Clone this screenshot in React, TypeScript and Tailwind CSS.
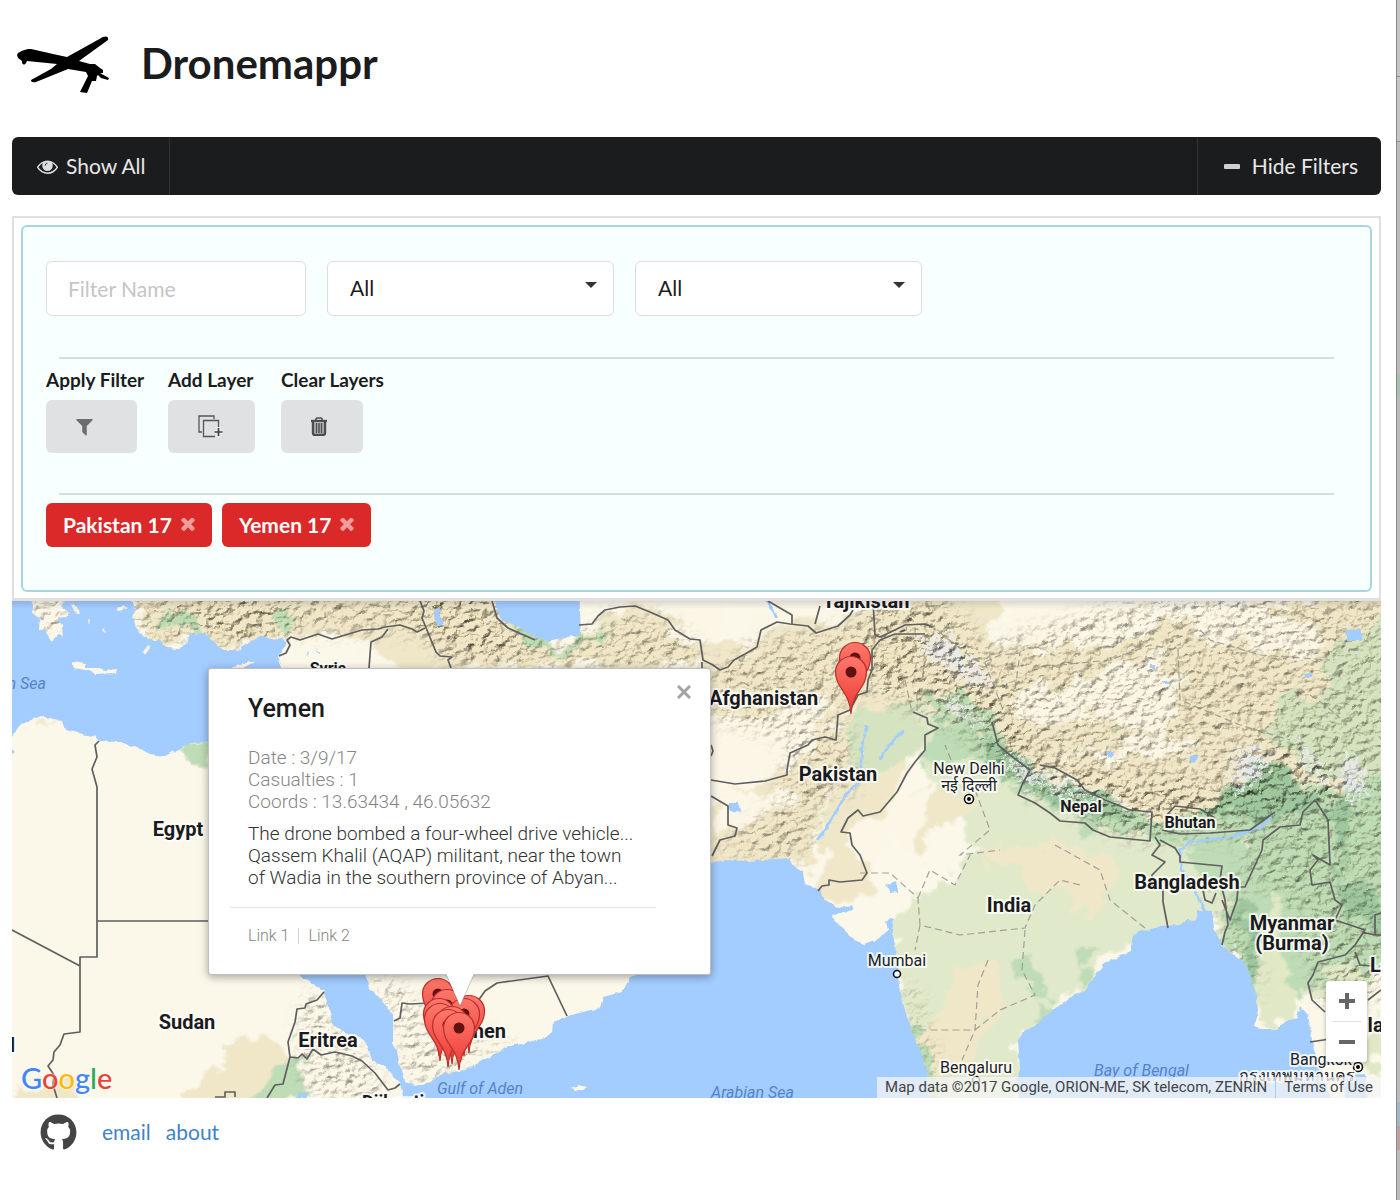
import React from "react";
import { FaGithub } from "react-icons/fa";

type IconProps = { className?: string };

const DroneLogo = ({ className }: IconProps) => (
  <svg viewBox="0 0 93 58" className={className} aria-hidden="true">
    <path
      fill="#000"
      d="M0 19 1 17C5 15 8 13 14 13C20 14 27 16 36 18L50 21L86 1Q92-1 91 4L62 25L73 28L78 28L83 32L86 34L86 37L83 37L92 42L91 44L84 42L81 39L80 40L79 45L75 45L70 57L63 56L71 40L69 36L51 33L19 46Q14 47 14 44L34 33L40 28L10 25L9 27Q7 30 5 27L5 25L1 22Z"
    />
  </svg>
);

const EyeIcon = ({ className }: IconProps) => (
  <svg viewBox="0 0 1792 1792" className={className} fill="currentColor" aria-hidden="true">
    <path d="M1664 960q-152-236-381-353 61 104 61 225 0 185-131.5 316.5t-316.5 131.5-316.5-131.5-131.5-316.5q0-121 61-225-229 117-381 353 133 205 333.5 326.5t434.5 121.5 434.5-121.5 333.5-326.5zm-720-384q0-20-14-34t-34-14q-125 0-214.5 89.5t-89.5 214.5q0 20 14 34t34 14 34-14 14-34q0-86 61-147t147-61q20 0 34-14t14-34zm848 384q0 34-20 69-140 230-376.5 368.5t-499.5 138.5-499.5-139-376.5-368q-20-35-20-69t20-69q140-229 376.5-368t499.5-139 499.5 139 376.5 368q20 35 20 69z" />
    <circle cx="896" cy="850" r="330" />
    <path d="M690 830q0-190 200-210" fill="none" stroke="#1b1c1d" strokeWidth="70" />
  </svg>
);

const FilterIcon = ({ className }: IconProps) => (
  <svg viewBox="0 0 1792 1792" className={className} fill="currentColor" aria-hidden="true">
    <path d="M1595 295q17 41-14 70l-493 493v742q0 42-39 59-13 5-25 5-27 0-45-19l-256-256q-19-19-19-45v-486l-493-493q-31-29-14-70 17-39 59-39h1280q42 0 59 39z" />
  </svg>
);

const TimesIcon = ({ className }: IconProps) => (
  <svg viewBox="280 410 1232 1232" className={className} fill="currentColor" aria-hidden="true">
    <path d="M1490 1322q0 40-28 68l-136 136q-28 28-68 28t-68-28l-294-294-294 294q-28 28-68 28t-68-28l-136-136q-28-28-28-68t28-68l294-294-294-294q-28-28-28-68t28-68l136-136q28-28 68-28t68 28l294 294 294-294q28-28 68-28t68 28l136 136q28 28 28 68t-28 68l-294 294 294 294q28 28 28 68z" />
  </svg>
);

const LayerIcon = ({ className }: IconProps) => (
  <svg viewBox="0 0 26 24" className={className} fill="none" stroke="#555" strokeWidth="1.3" aria-hidden="true">
    <path d="M4 17H1V1h15v3" />
    <path d="M17 21.500H5.500V5.500h15V14" />
    <path d="M20.500 12v10M16 17h9" stroke="#eee" strokeWidth="4" />
    <path d="M20.500 13v8M16.500 17h8" stroke="#444" strokeWidth="1.700" />
  </svg>
);

const TrashIcon = ({ className }: IconProps) => (
  <svg viewBox="0 0 16 19" className={className} fill="none" stroke="#4d4d4d" aria-hidden="true">
    <path d="M5 3V2q0-1 1-1h4q1 0 1 1v1" strokeWidth="1.600" />
    <path d="M0 4h16" strokeWidth="2.400" />
    <path d="M2 5v11q0 2 2 2h8q2 0 2-2V5" fill="#bcbdbe" strokeWidth="2.400" />
    <path d="M5.500 6v10M8 6v10M10.500 6v10" strokeWidth="1.500" />
  </svg>
);

const Chevron = () => (
  <svg viewBox="0 0 12 6" className="pointer-events-none absolute top-[21px] right-[17px] h-[6px] w-3" aria-hidden="true">
    <path d="M0 0h12L6 6z" fill="#333" />
  </svg>
);

const Dropdown = ({ label }: { label: string }) => (
  <div className="relative w-[287px]">
    <select
      aria-label={label}
      className="h-[55px] w-full appearance-none rounded-md border border-[#dcdddd] bg-white pr-10 pb-[2px] pl-[22px] text-[21px] text-[#1b1c1d]"
    >
      <option>All</option>
    </select>
    <Chevron />
  </div>
);

const LayerTag = ({ children }: { children: React.ReactNode }) => (
  <span className="flex h-11 items-center rounded-md bg-[#db2828] px-[17px] text-[21px] font-bold text-white">
    {children}
    <button type="button" aria-label="Remove layer" className="ml-[9px] text-white/55">
      <TimesIcon className="h-[14px] w-[14px]" />
    </button>
  </span>
);

const mainland =
  "M128 585L131 601 135 610 133 618 138 632 150 640 160 640 167 648 178 649 187 644 190 634 205 633 213 642 222 650 238 650 248 643 262 636 275 640 283 637 286 645 278 656 281 665 279 690 265 745 330 860 366 976 370 988 382 1000 393 1015 393 1045 398 1056 400 1068 404 1080 415 1086 430 1082 442 1074 460 1071 475 1065 485 1059 497 1054 505 1047 525 1043 545 1038 552 1032 553 1022 575 1014 600 1008 603 997 622 992 630 978 650 972 700 920 640 850 711 863 725 860 750 861 790 858 795 868 803 872 805 885 820 890 825 900 840 908 852 905 853 909 845 913 835 913 832 917 842 928 855 940 865 944 880 938 888 930 886 922 889 918 894 919 892 930 895 945 897 965 899 985 905 1010 912 1033 920 1050 927 1070 930 1110 1020 1110 1016 1080 1020 1070 1018 1040 1025 1030 1035 1026 1045 1016 1055 1009 1062 1003 1085 990 1105 963 1130 952 1133 935 1140 930 1150 931 1160 926 1180 925 1186 920 1195 921 1198 910 1212 911 1214 928 1222 945 1235 957 1245 962 1252 980 1257 1000 1258 1010 1254 1025 1262 1030 1277 1030 1284 1022 1297 1018 1300 1006 1308 1015 1311 1035 1314 1050 1322 1070 1334 1110 1345 1110 1342 1075 1366 1074 1367 1110 1395 1110 1395 585Z";

const africa =
  "M0 740L12 736 20 725 40 716 63 721 66 730 82 734 97 737 98 741 120 742 138 748 150 754 165 756 177 750 190 743 209 742 260 860 300 975 310 982 323 990 328 1005 333 1025 345 1033 360 1036 368 1047 372 1060 385 1066 400 1083 406 1110 0 1110Z";

const peninsulas = [
  "M30 595L33 606 32 613 40 619 39 629 46 632 52 642 58 634 63 638 62 625 57 619 66 618 70 613 62 607 68 595Z",
  "M73 662L85 664 85 668 100 668 104 671 117 670 116 673 95 674 90 671 73 668Z",
  "M230 668L250 662 254 662 243 668Z",
  "M142 653L148 645 150 648 145 655Z",
  "M571 1088L578 1085 587 1087 582 1091 575 1091Z",
  "M70 603l8 4 2 7-5-2zM103 630l2-2 1 5zM88 620l2 1-1 4zM116 608l8-2 4 2-9 3z",
];

const tan = [
  "M125 585H497L505 625 535 638 548 645 580 638 620 608 668 620 703 640 713 665 735 700 711 720 711 668H400L369 644 375 636 291 637 248 643 222 650 205 633 190 634 180 648 160 640 138 632Z",
  "M703 640L757 647 770 625 853 610 873 590H1000L990 640 1060 650 1120 640 1200 610 1395 590V850L1160 815 1030 765 925 715 850 710 800 745 711 730Z",
  "M711 800L780 770 850 715 860 730 830 790 805 870 711 862Z",
  "M180 1093L222 1072 225 1040 258 1040 261 1030 275 1030 274 1040 290 1045 285 1108H175Z",
  "M40 724L60 717 64 724 45 726ZM12 1086L30 1090 75 1084 78 1108H12Z",
  "M840 760Q870 725 925 735L880 812 860 830 870 890 855 905 825 900 815 885Z",
  "M930 835L980 800 970 790 920 780 890 815 925 855ZM920 1040L965 960 1000 960 1005 1000 980 1050 950 1080Z",
  "M975 850L1080 845 1120 870 1100 915 1040 890Z",
];

const cream = [
  "M1000 590H1170L1110 635 1060 652 1010 640Z",
  "M1170 612L1260 605 1330 640 1310 655 1240 645 1195 630Z",
  "M1060 680L1160 655 1180 690 1160 740 1085 715 1040 725 1000 700Z",
  "M711 720L780 710 830 690 820 730 787 770 711 780Z",
  "M841 832L863 816 897 792 935 780 930 820 890 850 867 873Z",
  "M711 795L790 785 800 795 760 820 720 830Z",
  "M580 590H730L725 630 700 638 640 604Z",
  "M780 590H850L835 625 790 620 760 645 735 655Z",
  "M1050 760L1180 735 1200 745 1150 760Z",
];

const green = [
  "M850 710L925 700 1030 770 1130 830 1300 815 1395 820 1395 960 1330 1000 1260 1000 1214 930 1212 911 1130 945 1105 963 1018 1040 1020 1110 930 1110 897 965 892 920 945 880 980 850 930 800 925 740 880 780 840 850 820 840 830 800 860 770Z",
];

const lush = [
  "M925 735L945 725 990 760 950 768 925 765Z",
  "M915 685L960 695 1000 735 1030 770 1150 815 1210 810 1250 760 1330 790 1395 770V960L1320 975 1300 1000 1262 1000 1222 945 1228 900 1250 840 1130 840 1018 795 970 750Z",
  "M1175 845L1240 835 1250 870 1225 895 1180 862Z",
  "M180 748L208 742V765L200 772 188 760Z",
  "M915 1030Q930 1035 938 1070L945 1098H930Z",
  "M1018 960L1038 956 1040 985 1055 1000 1042 1005 1025 985ZM1035 1018L1050 1012 1055 1020 1035 1030Z",
  "M255 1090L275 1065 300 1055 305 1098H250ZM500 620L518 625 560 645 620 625 570 655 530 645Z",
  "M160 620L200 640 210 640 195 625 170 605ZM270 630L290 615 287 635Z",
  "M1075 950L1100 945 1090 970 1078 975Z",
];

const paleGreen = [
  "M1270 710L1320 690 1345 640 1395 620V780H1310L1280 750Z",
  "M850 715L925 700 920 750 880 770 850 800Z",
];

const deepGreen = [
  "M1235 775L1265 765 1300 780 1325 800 1300 815 1240 822 1205 812Z",
  "M980 735L1010 750 1050 775 1140 812 1090 815 1030 795 990 765Z",
  "M1330 810L1350 800 1340 880 1395 900V950L1340 915Z",
  "M1230 905L1250 900 1262 960 1262 1000 1245 960Z",
];

const valley = [
  "M1265 900L1275 890 1285 905 1282 950 1295 1000 1290 1020 1260 1030 1263 1000 1258 960Z",
  "M1345 960L1360 955 1355 975 1348 975ZM1365 1030L1381 1020V1075H1365Z",
];

const ridges = [
  "M120 585H497L505 628 550 648 620 612 668 620 700 645 700 668H460L420 635 291 632 248 643 222 650 205 630 190 634 178 648 138 632Z",
  "M711 668L760 640 853 625 870 590H940L1030 690 1010 760 925 715 860 690 800 740 711 720Z",
  "M790 735L845 715 858 790 820 800 805 860 711 855 780 800Z",
  "M900 640L1000 690 1010 735 1395 760V1000H1320L1290 900 1250 880 1222 930 1250 840 1130 840 980 760Z",
  "M1000 640L1130 601 1250 585 1395 585V780H1150L1010 740 990 690Z",
  "M305 1000L320 992 345 1040 370 1060 385 1098H310L300 1050Z",
  "M368 978L390 978 425 1010 430 1045 510 1035 500 1050 430 1080 405 1078 398 1020Z",
  "M901 990L912 985 925 1030 945 1080 930 1080Z",
  "M25 590H70L62 638 48 638ZM1214 900L1250 930 1262 1000 1230 950Z",
];

const rugged = [
  "M860 640L900 600 940 620 1010 690 1030 755 980 720 925 690 880 690 850 660Z",
  "M990 735L1060 765 1160 790 1240 780 1260 740 1330 760 1350 800 1240 820 1130 830 1030 790Z",
  "M160 600L200 625 245 640 290 630 280 605ZM400 590H490L500 625 540 645 520 660 450 655Z",
];

const peaks = [
  "M915 640L945 635 985 675 990 690 960 675 925 655Z",
  "M935 690L965 705 985 725 960 715Z",
  "M1000 750L1040 775 1100 800 1080 800 1020 778Z",
  "M1235 750L1270 750 1260 775 1235 795ZM1345 755L1365 770 1360 800 1340 790Z",
  "M1295 735L1325 775 1330 795 1305 765Z",
];

const water =
  "M493 585L495 601 499 617 510 623 518 626 535 637 548 641 565 637 581 635 579 585ZM434 608L438 608 443 624 438 627 434 617ZM1345 632L1360 628 1363 640 1347 640ZM728 803L738 803 741 812 731 811ZM886 885L896 881 898 892 890 893ZM1106 752h7l1 5-6 1zM1188 756l11-1-3 6-6 2zM1163 681h7v3h-6zM1303 674l9-1v4h-8zM1150 665h5v4h-5zM0 740L15 752 0 762zM298 1093h9v5h-10zM307 652l2-2-1 7zM315 648l5 5v2z";

const rivers =
  "M867 725L862 745 860 780 845 795 828 825 817 840M903 730L885 750 880 760M1275 812L1260 828 1225 838 1190 842 1180 850 1182 870 1195 890 1205 912M767 600l10 18";

const borders =
  "M279 656L286 653 290 645 287 640 291 637 300 640 318 634 332 639 362 630 378 629 385 627 400 625 412 629 417 632 425 628M388 629L382 637 371 642 369 668M420 601L424 611 422 618 427 630 436 652 440 656 452 657 448 660 451 668M99 741L95 745 97 757 92 769 97 787V957H80V1032L64 1034 60 1045 54 1052 53 1060 48 1066 54 1075 53 1085 57 1098M97 921H209M12 930L80 966M324 992L317 1000 306 1004 305 1008 297 1009 295 1022 288 1042 290 1057 283 1084 275 1085 267 1098M290 1057L298 1058 302 1054 307 1059 313 1049 321 1055 335 1052 352 1056 362 1061 375 1073 388 1090 395 1088 400 1084M215 1097h10v-5h10v5M394 1021L400 1018 402 1003 410 1004 430 1003M470 1010L478 1001 485 991 497 983 548 976 567 1016M579 625L592 624 598 616 605 610 620 607 635 606 650 612 668 620 675 630 690 639 700 640 703 660 713 665 720 670 728 667 734 660 745 654 757 647 761 630 777 622 790 624 808 626 816 633 838 626 850 615 853 610M792 624L792 615 768 601M702 662V668M815 624L820 606M873 601L875 635 880 637 895 630 905 625 925 624 932 627M492 601L497 618 508 628 535 640M711 780L735 784 765 781 787 775 787 770 790 753 808 745 812 740 825 737 836 740 838 715 850 710 858 695 867 692 868 680 872 670 872 650 880 640 895 634 925 634M711 796L728 806V825L737 828 735 836 720 840 712 856M711 745l2 6-2 5M818 891L822 886 829 885 829 880 840 882 862 880 867 873 860 855 852 845 850 833 841 832 848 818 858 810 863 816 880 812 897 792 907 773 915 762 925 750 925 735 938 728 928 724 927 718 913 712M992 722L998 745 1010 755 1030 770 1022 785 1018 795 1035 803 1050 813 1060 821 1085 823 1093 830 1110 837 1130 839 1150 841 1152 812 1130 810 1105 800 1085 790 1077 780 1055 768 1040 765M1165 817L1175 806 1200 809 1215 818M1162 830L1180 834 1210 833 1250 830 1268 817 1275 812M1155 837L1160 845 1152 855 1165 862 1152 875 1152 885 1163 890 1163 902 1168 928M1160 840L1175 848 1180 856V862L1222 866 1220 880 1225 900 1228 925 1225 932 1222 945M1203 890L1205 900 1212 903 1216 893M1222 900L1230 920 1237 900 1238 887 1245 887 1262 850 1263 840 1280 827 1300 825 1303 812 1315 800 1328 820 1330 865 1313 855 1318 860 1310 870 1312 885 1330 882 1335 900 1342 905 1335 920 1365 930 1355 945 1345 955 1318 962 1313 975 1308 983 1312 1000 1325 1012M1362 932L1375 935H1381M1355 952L1360 965 1372 966M1310 1042L1330 1039M1368 1000L1381 990M1375 935V915L1381 913";

const dashed =
  "M905 680L912 712M917 693V712M930 625L975 660 985 663 1005 715 992 722M985 662L1000 655 1020 653 1015 690M860 873L890 873 918 898 920 925 960 935 1025 928 1035 905 1060 880 1080 885M918 898L930 870 955 885 970 855M955 770L945 745M975 790L990 830 960 855 1000 850M988 960L978 985 975 1030 962 1060M1025 930L1022 970 1035 995 1000 1010 975 1030 915 1030M1060 665L1110 660 1150 645 1178 650 1180 700 1240 725 1290 740M1200 630L1210 640 1260 655 1330 660M1055 845L1100 870 1110 900 1145 928M920 925L915 950M1310 695L1325 705 1340 718";

const countries: { text: string; x: number; y: number; size: number; anchor?: "end" | "middle" }[] = [
  { text: "Syria", x: 328, y: 674, size: 16, anchor: "middle" },
  { text: "Egypt", x: 178, y: 836, size: 20, anchor: "middle" },
  { text: "Sudan", x: 187, y: 1029, size: 20, anchor: "middle" },
  { text: "Eritrea", x: 328, y: 1047, size: 20, anchor: "middle" },
  { text: "Chad", x: 15, y: 1052, size: 20, anchor: "end" },
  { text: "Djibouti", x: 362, y: 1108, size: 18 },
  { text: "Yemen", x: 506, y: 1038, size: 20, anchor: "end" },
  { text: "Tajikistan", x: 866, y: 608, size: 20, anchor: "middle" },
  { text: "Afghanistan", x: 709, y: 705, size: 20 },
  { text: "Pakistan", x: 838, y: 781, size: 20, anchor: "middle" },
  { text: "India", x: 1009, y: 912, size: 20, anchor: "middle" },
  { text: "Nepal", x: 1081, y: 812, size: 16, anchor: "middle" },
  { text: "Bhutan", x: 1190, y: 828, size: 16, anchor: "middle" },
  { text: "Bangladesh", x: 1187, y: 889, size: 20, anchor: "middle" },
  { text: "Myanmar", x: 1292, y: 930, size: 20, anchor: "middle" },
  { text: "(Burma)", x: 1292, y: 950, size: 20, anchor: "middle" },
  { text: "Laos", x: 1370, y: 972, size: 20 },
  { text: "Thailand", x: 1328, y: 1032, size: 20 },
];

const cities = [
  { text: "New Delhi", x: 969, y: 774 },
  { text: "नई दिल्ली", x: 969, y: 791 },
  { text: "Mumbai", x: 897, y: 966 },
  { text: "Bengaluru", x: 976, y: 1073 },
  { text: "Bangkok", x: 1321, y: 1065 },
  { text: "กรุงเทพมหานคร", x: 1297, y: 1081 },
];

const seas: { text: string; x: number; y: number; anchor?: "end" }[] = [
  { text: "Mediterranean Sea", x: 46, y: 689, anchor: "end" },
  { text: "Gulf of Aden", x: 437, y: 1094 },
  { text: "Arabian Sea", x: 711, y: 1098 },
  { text: "Bay of Bengal", x: 1094, y: 1076 },
];

const pins = [
  [855, 700],
  [851, 714],
  [438, 1036],
  [447, 1047],
  [469, 1053],
  [464, 1056],
  [439, 1056],
  [440, 1061],
  [452, 1064],
  [448, 1067],
  [459, 1070],
];

const Shapes = ({ paths, fill }: { paths: string[]; fill: string }) => (
  <g fill={fill}>
    {paths.map((d) => (
      <path key={d} d={d} />
    ))}
  </g>
);

const TerrainMap = () => (
  <svg
    viewBox="12 601 1369 497"
    preserveAspectRatio="xMinYMin slice"
    className="block h-full w-full"
    role="img"
    aria-label="Map of drone strikes"
  >
    <defs>
      <clipPath id="land">
        <path d={mainland} />
        <path d={africa} />
        {peninsulas.map((d) => (
          <path key={d} d={d} />
        ))}
      </clipPath>
      <filter id="soft" x="-10%" y="-10%" width="120%" height="120%">
        <feTurbulence type="fractalNoise" baseFrequency="0.04" numOctaves="4" seed="4" result="n" />
        <feDisplacementMap in="SourceGraphic" in2="n" scale="42" xChannelSelector="R" yChannelSelector="G" />
        <feGaussianBlur stdDeviation="1" />
      </filter>
      <filter id="coast" x="-2%" y="-4%" width="104%" height="108%">
        <feTurbulence type="fractalNoise" baseFrequency="0.15" numOctaves="2" seed="2" result="n" />
        <feDisplacementMap in="SourceGraphic" in2="n" scale="4" xChannelSelector="R" yChannelSelector="G" />
      </filter>
      <filter id="relief" x="0" y="0" width="100%" height="100%" colorInterpolationFilters="sRGB">
        <feTurbulence type="fractalNoise" baseFrequency="0.1 0.15" numOctaves="5" seed="9" result="n" />
        <feColorMatrix in="n" type="matrix" values="0 0 0 0 0 0 0 0 0 0 0 0 0 0 0 1 0 0 0 0" result="h" />
        <feDiffuseLighting in="h" surfaceScale="3" diffuseConstant="1.22" lightingColor="#fffcf2" result="lit">
          <feDistantLight azimuth="225" elevation="56" />
        </feDiffuseLighting>
        <feGaussianBlur in="SourceAlpha" stdDeviation="9" result="edge" />
        <feComposite in="lit" in2="edge" operator="in" />
      </filter>
      <filter id="snow" x="-10%" y="-10%" width="120%" height="120%">
        <feTurbulence type="fractalNoise" baseFrequency="0.2" numOctaves="3" seed="6" result="n" />
        <feDisplacementMap in="SourceGraphic" in2="n" scale="40" xChannelSelector="R" yChannelSelector="G" />
      </filter>
      <linearGradient id="pin" x1="0" y1="0" x2="0" y2="1">
        <stop offset="0" stopColor="#ff776b" />
        <stop offset="1" stopColor="#ea3a33" />
      </linearGradient>
      <linearGradient id="topShade" x1="0" y1="0" x2="0" y2="1">
        <stop offset="0" stopColor="#000" stopOpacity="0.12" />
        <stop offset="1" stopColor="#000" stopOpacity="0" />
      </linearGradient>
    </defs>

    <rect x="12" y="601" width="1369" height="497" fill="#a3ccff" />
    <g filter="url(#coast)">
      <g clipPath="url(#land)">
        <rect x="0" y="585" width="1395" height="525" fill="#fbf7e9" />
        <g filter="url(#soft)">
          <Shapes paths={green} fill="#e0e9c9" />
          <Shapes paths={tan} fill="#f0e7c9" />
          <Shapes paths={cream} fill="#fbf6e6" />
          <Shapes paths={paleGreen} fill="#d5e3c1" />
          <Shapes paths={lush} fill="#bedcb5" />
          <Shapes paths={deepGreen} fill="#9fc8a0" />
          <Shapes paths={valley} fill="#e0e8c6" />
        </g>
        <g filter="url(#snow)" opacity="0.8">
          <Shapes paths={peaks} fill="#ececf4" />
        </g>
        <g className="mix-blend-multiply" opacity="0.7">
          <g filter="url(#relief)">
            <Shapes paths={ridges} fill="#000" />
          </g>
        </g>
        <g className="mix-blend-multiply" opacity="0.6">
          <g filter="url(#relief)">
            <Shapes paths={rugged} fill="#000" />
          </g>
        </g>
      </g>
      <path d={water} fill="#a3ccff" />
      <path d={rivers} fill="none" stroke="#a3ccff" strokeWidth="2.500" />
    </g>

    <path d={dashed} fill="none" stroke="#8f8f8a" strokeOpacity="0.8" strokeWidth="1.200" strokeDasharray="7 4" />
    <path d={borders} fill="none" stroke="#5f5f5f" strokeWidth="1.700" strokeLinejoin="round" />

    <g fill="#fff" stroke="#111" strokeWidth="1.600">
      <circle cx="897" cy="974" r="3.500" />
      <circle cx="976" cy="1080" r="3.500" />
      <circle cx="969" cy="799" r="4.500" />
      <circle cx="1358" cy="1067" r="4.500" />
    </g>
    <circle cx="969" cy="799" r="2" />
    <circle cx="1358" cy="1067" r="2" />

    <g strokeLinejoin="round" className="[font-family:Roboto,'Noto_Sans',sans-serif] [paint-order:stroke]">
      <g fill="#1b1b1b" stroke="#fff" strokeOpacity="0.8" strokeWidth="4" fontWeight="700">
        {countries.map((c) => (
          <text key={c.text} x={c.x} y={c.y} fontSize={c.size} textAnchor={c.anchor}>
            {c.text}
          </text>
        ))}
      </g>
      <g fill="#222" stroke="#fff" strokeOpacity="0.8" strokeWidth="4" fontSize="16" textAnchor="middle">
        {cities.map((c) => (
          <text key={c.text} x={c.x} y={c.y}>
            {c.text}
          </text>
        ))}
      </g>
      <g fill="#5583c6" fontSize="16" fontStyle="italic">
        {seas.map((s) => (
          <text key={s.text} x={s.x} y={s.y} textAnchor={s.anchor}>
            {s.text}
          </text>
        ))}
      </g>
    </g>

    {pins.map(([x, y]) => (
      <g key={`${x}-${y}`} transform={`translate(${x} ${y})`}>
        <path
          d="M0 0C-1-22-15.500-26-15.500-42A15.500 15.500 0 0 1 15.500-42C15.500-26 1-22 0 0Z"
          fill="url(#pin)"
          stroke="#b5302b"
          strokeWidth="1.200"
        />
        <circle cy="-42" r="5.500" fill="#5f1210" />
      </g>
    ))}
    <rect x="12" y="601" width="1369" height="8" fill="url(#topShade)" />
  </svg>
);

const InfoWindow = () => (
  <section
    aria-label="Yemen strike details"
    className="absolute top-[67px] left-[196px] w-[503px] rounded-[3px] border border-black/25 bg-white px-[21px] pt-3 pb-4 shadow-[0_2px_8px_rgba(0,0,0,0.35)] [font-family:Roboto,sans-serif]"
  >
    <button type="button" aria-label="Close" className="absolute top-4 right-[19px] text-[#a3a3a3]">
      <svg viewBox="0 0 14 14" className="h-[14px] w-[14px]" fill="none" stroke="currentColor" strokeWidth="3" aria-hidden="true">
        <path d="M1 1l12 12M13 1L1 13" />
      </svg>
    </button>
    <div className="w-[426px] rounded-md">
      <div className="px-[18px] pt-3 pb-[18px]">
        <h2 className="text-[25px] leading-8 font-medium text-[#1b1c1d]">Yemen</h2>
        <div className="mt-[22px] text-[19px] leading-[22px] font-light text-[#858585]">
          <p>Date : 3/9/17</p>
          <p>Casualties : 1</p>
          <p>Coords : 13.63434 , 46.05632</p>
        </div>
        <p className="mt-[10px] text-[19px] leading-[22px] font-light text-[#333]">
          The drone bombed a four-wheel drive vehicle...
          <br />
          Qassem Khalil (AQAP) militant, near the town
          <br />
          of Wadia in the southern province of Abyan...
        </p>
      </div>
      <div className="flex items-center border-t border-[#e6e6e6] px-[18px] pt-4 pb-[10px] text-[16px] leading-6 font-light text-[#858585]">
        <a href="#link-1">Link 1</a>
        <span className="mx-[9px] h-4 w-px bg-[#d4d4d4]" />
        <a href="#link-2">Link 2</a>
      </div>
    </div>
    <svg viewBox="0 0 30 34" className="absolute top-full left-[236px] h-[34px] w-[30px]" aria-hidden="true">
      <path d="M1 0L15 32L29 0" fill="#fff" stroke="#000" strokeOpacity="0.2" />
      <path d="M2-2H28V1H2Z" fill="#fff" />
    </svg>
  </section>
);

export default function App() {
  return (
    <div className="flex min-h-screen bg-white text-[#1b1c1d] [font-family:Lato,sans-serif]">
      <div className="min-w-0 flex-1 pr-[15px] pl-3">
        <header className="flex h-[137px] items-start pt-9 pl-[5px]">
          <DroneLogo className="h-[58px] w-[93px]" />
          <h1 className="ml-[31px] text-[42px] leading-[54px] font-bold">Dronemappr</h1>
        </header>

        <nav className="flex h-[58px] justify-between rounded-md bg-[#1b1c1d] text-[21px] text-white/90">
          <button type="button" className="flex items-center gap-2 border-r border-white/10 pr-[23px] pl-[25px]">
            <EyeIcon className="h-[21px] w-[21px] text-[#dedede]" />
            Show All
          </button>
          <button type="button" className="flex items-center gap-3 border-l border-white/10 pr-[23px] pl-[26px]">
            <span className="h-[5px] w-4 rounded-[1px] bg-[#d0d0d0]" />
            Hide Filters
          </button>
        </nav>

        <main className="mt-[21px]">
          <form className="border-2 border-b-[3px] border-[#dedfdf] p-[7px] pb-[6px]">
            <div className="rounded-md border-2 border-[#a9d5de] bg-[#f8ffff] px-[23px] pt-[34px] pb-[43px]">
              <div className="flex flex-wrap gap-[21px]">
                <input
                  aria-label="Filter Name"
                  placeholder="Filter Name"
                  className="h-[55px] w-[260px] rounded-md border border-[#dcdddd] bg-white px-[21px] text-[21px] placeholder:text-[#c4c5c5]"
                />
                <Dropdown label="Country" />
                <Dropdown label="Year" />
              </div>

              <hr className="mt-[41px] mr-[13px] ml-[13px] border-t-2 border-[#d5dedf]" />

              <div className="mt-[7px] flex text-[19px] leading-7 font-bold">
                <div className="w-[122px]">
                  <label htmlFor="apply-filter" className="block">Apply Filter</label>
                  <button id="apply-filter" type="button" className="mt-[6px] flex h-[53px] w-[91px] items-center rounded-md bg-[#e0e1e2] pl-7 text-[#6c6d6e]">
                    <FilterIcon className="h-[21px] w-[21px]" />
                  </button>
                </div>
                <div className="w-[113px]">
                  <label htmlFor="add-layer" className="block">Add Layer</label>
                  <button id="add-layer" type="button" className="mt-[6px] flex h-[53px] w-[87px] items-center rounded-md bg-[#e0e1e2] pl-[30px]">
                    <LayerIcon className="h-6 w-[26px]" />
                  </button>
                </div>
                <div>
                  <label htmlFor="clear-layers" className="block">Clear Layers</label>
                  <button id="clear-layers" type="button" className="mt-[6px] flex h-[53px] w-[82px] items-center rounded-md bg-[#e0e1e2] pl-[30px]">
                    <TrashIcon className="h-[19px] w-4" />
                  </button>
                </div>
              </div>

              <hr className="mt-10 mr-[13px] ml-[13px] border-t-2 border-[#d5dedf]" />

              <div className="mt-2 flex gap-[10px]">
                <LayerTag>Pakistan 17</LayerTag>
                <LayerTag>Yemen 17</LayerTag>
              </div>
            </div>
          </form>

          <div className="relative h-[497px] overflow-hidden">
            <TerrainMap />
            <InfoWindow />
            <a
              href="#google"
              aria-label="Google"
              className="absolute bottom-[2px] left-[9px] text-[29px] leading-9 font-medium [text-shadow:0_0_2px_#fff,0_0_2px_#fff]"
            >
              <span className="text-[#4285f4]">G</span>
              <span className="text-[#ea4335]">o</span>
              <span className="text-[#fbbc05]">o</span>
              <span className="text-[#4285f4]">g</span>
              <span className="text-[#34a853]">l</span>
              <span className="text-[#ea4335]">e</span>
            </a>
            <div className="absolute right-0 bottom-0 flex h-[21px] items-center bg-[#f5f5f5]/75 pr-2 pl-2 text-[15px] text-[#444] [font-family:Roboto,sans-serif]">
              <span>Map data ©2017 Google, ORION-ME, SK telecom, ZENRIN</span>
              <span className="mx-2 h-full w-px bg-[#a3ccff]" />
              <a href="#terms">Terms of Use</a>
            </div>
            <div className="absolute right-[14px] bottom-9 flex w-[41px] flex-col items-center rounded-[3px] bg-white shadow-[0_1px_4px_rgba(0,0,0,0.3)]">
              <button type="button" aria-label="Zoom in" className="flex h-10 w-full items-center justify-center">
                <svg viewBox="0 0 16 16" className="h-4 w-4" stroke="#666" strokeWidth="4" aria-hidden="true">
                  <path d="M8 0v16M0 8h16" />
                </svg>
              </button>
              <span className="h-px w-7 bg-[#e0e0e0]" />
              <button type="button" aria-label="Zoom out" className="flex h-10 w-full items-center justify-center">
                <svg viewBox="0 0 16 4" className="h-1 w-4" fill="#666" aria-hidden="true">
                  <path d="M0 0h16v4H0z" />
                </svg>
              </button>
            </div>
          </div>
        </main>

        <footer className="flex items-center pt-4 pl-7 text-[21px] text-[#4183c4]">
          <a href="#github" aria-label="GitHub" className="text-[#444]">
            <FaGithub className="h-[37px] w-[37px]" />
          </a>
          <a href="#email" className="ml-[25px] pb-[2px]">email</a>
          <a href="#about" className="ml-[15px] pb-[2px]">about</a>
        </footer>
      </div>
      <div className="flex w-1 flex-col border-l border-[#8a8a8a] bg-[#bcbcbc]">
        <span className="h-[77px] border-b border-[#8a8a8a] bg-[#c6c6c6]" />
        <span className="h-[65px] border-b border-[#8a8a8a] bg-[#c6c6c6]" />
        <span className="mt-[232px] h-[23px] bg-[#a9c0b4]" />
        <span className="mt-[705px] h-[24px] bg-[#9fb8c4]" />
        <span className="h-[24px] bg-[#c0a0a0]" />
      </div>
    </div>
  );
}
